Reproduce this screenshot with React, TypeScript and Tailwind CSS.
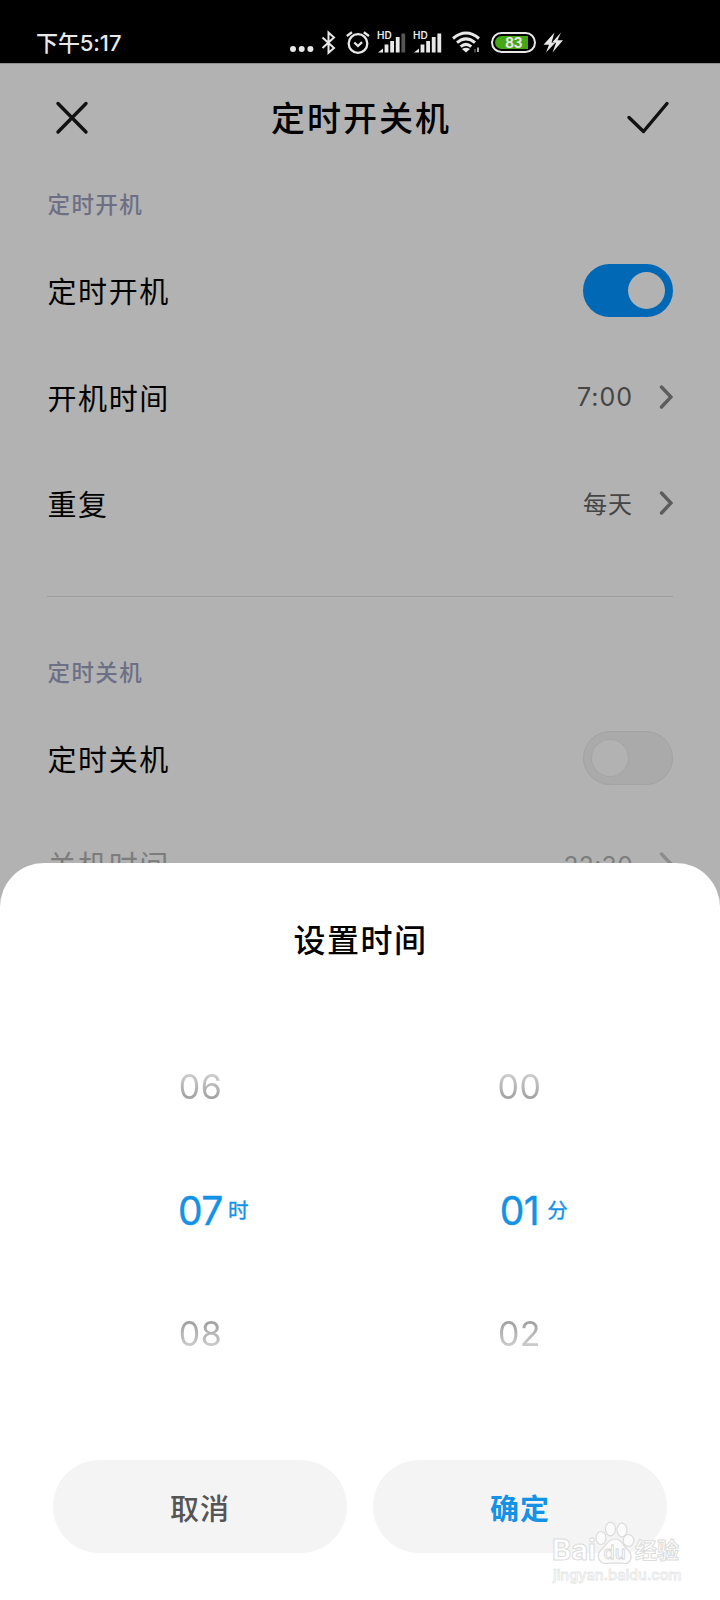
import type { ReactNode } from "react";

const bars = [8, 11.5, 15.5, 19];

function Signal({ weak }: { weak?: boolean }) {
  return (
    <div className="relative h-[24px] w-[28px]">
      <span className="absolute -left-[1px] top-0 text-[10px] leading-[9px] font-semibold">HD</span>
      <svg className="absolute inset-0" width="28" height="24" viewBox="0 0 28 24" fill="#e8e8e8">
        <path d="M0 21.5 L5 17.5 V21.5 Z" />
        {bars.map((h, i) => (
          <rect key={h} x={6.6 + i * 5.6} y={21.5 - h} width="3.8" height={h} fill={weak && i === 3 ? "#555" : "#e8e8e8"} />
        ))}
      </svg>
    </div>
  );
}

function StatusBar() {
  return (
    <div className="flex h-[63px] items-start bg-black pt-[30px] pl-[36px] text-[#e8e8e8]">
      <div className="w-[254px] whitespace-nowrap text-[22px] leading-[27px] font-medium tracking-[-0.1px]">
        下午5:17
      </div>
      <svg width="84" height="26" viewBox="290 30 84 26" className="shrink-0" fill="none" stroke="#e8e8e8" strokeWidth="2">
        <g fill="#e8e8e8" stroke="none">
          <circle cx="293" cy="49" r="3" />
          <circle cx="301.7" cy="49" r="3" />
          <circle cx="310.4" cy="49" r="3" />
        </g>
        <path d="M322.5 37.5 L334 48 L328.5 52.8 V32.5 L334 37.5 L322.5 48" />
        <circle cx="358" cy="43.5" r="9.3" strokeWidth="2.3" />
        <path d="M354.3 42.5 L358 46 L362 42.2 M346.8 36 L352 32.3 M369 36 L363.8 32.3" strokeWidth="2.3" />
      </svg>
      <div className="ml-[4px] mt-[1px] flex gap-[8px]">
        <Signal weak />
        <Signal />
      </div>
      <svg width="28" height="24" viewBox="452 31 28 24" className="ml-[10px] shrink-0" fill="none" stroke="#e8e8e8" strokeWidth="3">
        <path d="M453 39.5 Q466 28.5 479 39.5 M457 43.7 Q466 36 475 43.7 M460.7 47.6 Q466 43.2 471.3 47.6" />
        <path d="M462 50 Q466 47.4 470 50 L466 53.5 Z" fill="#e8e8e8" stroke="none" />
        <path d="M475 50 V53.5" strokeWidth="1.2" stroke="#777" />
        <path d="M478 48.5 V53" strokeWidth="1.5" />
      </svg>
      <div className="ml-[11px] mt-[2px] flex h-[21px] w-[45px] shrink-0 rounded-full border-2 border-[#e8e8e8] p-[2px]">
        <div className="flex w-[33px] items-center justify-center rounded-l-full bg-[#45a616] text-[14px] leading-none font-bold tracking-[-0.5px]">
          <span className="ml-[4px]">83</span>
        </div>
      </div>
      <svg width="20" height="22" viewBox="542 32 20 22" className="ml-[7px] mt-[2px] shrink-0" fill="#e8e8e8">
        <path d="M553.5 32.5 L542.5 44.8 H548 L545 52.5 L554.5 42.5 H550.5 Z" />
        <path d="M560 32.5 L551.5 42 L555 43 L551.5 52.5 L562 40.2 H556.5 Z" />
      </svg>
    </div>
  );
}

function Switch({ on }: { on?: boolean }) {
  return on ? (
    <div className="flex h-[53px] w-[90px] items-center justify-end rounded-full bg-[#0068b4] pr-[8px]">
      <div className="size-[37px] rounded-full bg-[#b2b2b2]" />
    </div>
  ) : (
    <div className="flex h-[54px] w-[90px] items-center rounded-full border border-[#a3a3a3] bg-[#aaaaaa] pl-[8px]">
      <div className="size-[36px] rounded-full bg-[#b2b2b2] ring-1 ring-[#a5a5a5]" />
    </div>
  );
}

function Row({ label, dim, children }: { label: string; dim?: boolean; children: ReactNode }) {
  return (
    <div className={"flex h-[106.5px] items-center justify-between pr-[47px] pl-[47.5px] " + (dim ? "text-[#7c7c7c]" : "text-black")}>
      <span className="pt-[6px] text-[29px] leading-[40px] tracking-[1.6px]">{label}</span>
      {children}
    </div>
  );
}

function Value({ text, dim, cjk }: { text: string; dim?: boolean; cjk?: boolean }) {
  return (
    <div className={"flex items-center gap-[26px] " + (dim ? "text-[#7c7c7c]" : "text-[#454545]")}>
      <span className={cjk ? "pt-[4px] text-[24px] tracking-[1px]" : dim ? "pt-[2px] text-[24.5px] tracking-[0.4px]" : "pt-[2px] text-[25px] tracking-[1px]"}>{text}</span>
      <svg width="14" height="24" viewBox="0 0 14 24" fill="none" stroke={dim ? "#8c8c8c" : "#5c5c5c"} strokeWidth="3.4" strokeLinecap="round">
        <path d="M2.5 2 L12 12 L2.5 22" />
      </svg>
    </div>
  );
}

function Section({ children }: { children: string }) {
  return <div className="pl-[47.5px] text-[22.5px] leading-[32px] font-medium tracking-[1.4px] text-[#6d6f85]">{children}</div>;
}

function Wheel({ values, unit }: { values: string[]; unit: ReactNode }) {
  return (
    <div className="flex w-[80px] flex-col items-center">
      <div className="flex h-[123.5px] items-center bg-linear-to-b from-[#cccccc] from-40% to-[#a0a0a0] to-60% bg-clip-text text-[34px] tracking-[0.5px] text-transparent">
        {values[0]}
      </div>
      <div className="relative flex h-[123.5px] items-center pt-[2px] text-[39px] tracking-[-0.5px] text-[#1492e6] [-webkit-text-stroke:0.4px_#1492e6]">
        {values[1]}
        {unit}
      </div>
      <div className="flex h-[123.5px] items-center bg-linear-to-b from-[#a0a0a0] from-40% to-[#cccccc] to-60% bg-clip-text text-[34px] tracking-[0.5px] text-transparent">
        {values[2]}
      </div>
    </div>
  );
}

function Watermark() {
  return (
    <div className="absolute top-[1520px] left-[552px] h-[66px] w-[132px] text-white">
      <svg className="absolute inset-0" width="132" height="66" viewBox="552 1520 132 66" fill="#fbfbfb" stroke="#dcdcdc" strokeWidth="1.2">
        <ellipse cx="601" cy="1538" rx="5" ry="6.5" />
        <ellipse cx="610.5" cy="1529" rx="5" ry="6.8" />
        <ellipse cx="622" cy="1530" rx="5" ry="6.8" />
        <ellipse cx="628.5" cy="1540.5" rx="5.3" ry="6" />
        <path d="M615 1539 C608 1539 606 1546 601.5 1549.5 C596 1554 598 1563.5 606 1563.5 C610 1563.5 612 1562.8 616 1562.8 C620 1562.8 622 1563.5 625 1563.5 C632 1563.5 633 1554 627.5 1549.5 C622.5 1545.5 622 1539 615 1539 Z" />
      </svg>
      <span className="absolute top-[15px] left-0 text-[29px] leading-[30px] font-bold [-webkit-text-stroke:1px_#dcdcdc]">Bai</span>
      <span className="absolute top-[23px] left-[51.5px] text-[18px] leading-[20px] font-medium [-webkit-text-stroke:0.8px_#d5d5d5]">du</span>
      <span className="absolute top-[15px] left-[83px] text-[22px] leading-[30px] font-bold whitespace-nowrap [-webkit-text-stroke:1px_#dcdcdc]">经验</span>
      <span className="absolute top-[46px] left-[1px] text-[14.6px] leading-[18px] font-medium [-webkit-text-stroke:0.8px_#e6e6e6]">jingyan.baidu.com</span>
    </div>
  );
}

export default function App() {
  return (
    <div className="relative flex h-[1600px] w-[720px] flex-col overflow-hidden bg-[#b2b2b2] font-['Inter','Noto_Sans_CJK_SC',sans-serif]">
      <StatusBar />
      <header className="flex h-[110px] items-center justify-between border-t border-[#8f8f8f] pr-[50px] pb-[2px] pl-[55px]">
        <svg width="42" height="34" viewBox="0 0 42 34" fill="none" stroke="#111" strokeWidth="3.4" strokeLinecap="round">
          <path d="M3 2.5 L31 31 M31 2.5 L3 31" />
        </svg>
        <h1 className="-ml-[1px] pt-[2px] text-[34px] leading-[48px] font-medium tracking-[2px]">定时开关机</h1>
        <svg width="44" height="34" viewBox="0 0 44 34" fill="none" stroke="#111" strokeWidth="3.4" strokeLinecap="round" strokeLinejoin="round">
          <path d="M3 16.5 L17.5 30.5 L41 2.5" />
        </svg>
      </header>
      <main className="h-[690px] overflow-hidden pt-[16px]">
        <Section>定时开机</Section>
        <div className="mt-[16px]">
          <Row label="定时开机"><Switch on /></Row>
          <Row label="开机时间"><Value text="7:00" /></Row>
          <Row label="重复"><Value text="每天" cjk /></Row>
        </div>
        <div className="mx-[47px] mt-[39px] h-px bg-[#9d9d9d]" />
        <div className="mt-[60px]"><Section>定时关机</Section></div>
        <div className="mt-[16px]">
          <Row label="定时关机"><Switch /></Row>
          <Row label="关机时间" dim><Value text="22:30" dim /></Row>
        </div>
      </main>
      <section className="flex h-[737px] flex-col rounded-t-[44px] bg-white pt-[54px]">
        <h2 className="pl-[1px] text-center text-[32px] leading-[48px] font-medium tracking-[1.5px]">设置时间</h2>
        <div className="mt-[60px] flex justify-between pr-[160.5px] pl-[160.5px]">
          <Wheel values={["06", "07", "08"]} unit={<span className="absolute top-[47px] left-full ml-[5px] text-[20.5px] leading-[30px] tracking-normal">时</span>} />
          <Wheel values={["00", "01", "02"]} unit={<span className="absolute top-[47px] left-full ml-[8px] text-[20.5px] leading-[30px] tracking-normal">分</span>} />
        </div>
        <div className="mt-[64.5px] grid grid-cols-2 gap-[26px] px-[53px]">
          <button className="h-[93px] rounded-full bg-[#f4f4f4] pt-[6px] text-[29px] font-medium tracking-[1px] text-[#555]">取消</button>
          <button className="h-[93px] rounded-full bg-[#f4f4f4] pt-[6px] text-[29px] font-bold tracking-[1px] text-[#1492e6]">确定</button>
        </div>
      </section>
      <Watermark />
    </div>
  );
}
